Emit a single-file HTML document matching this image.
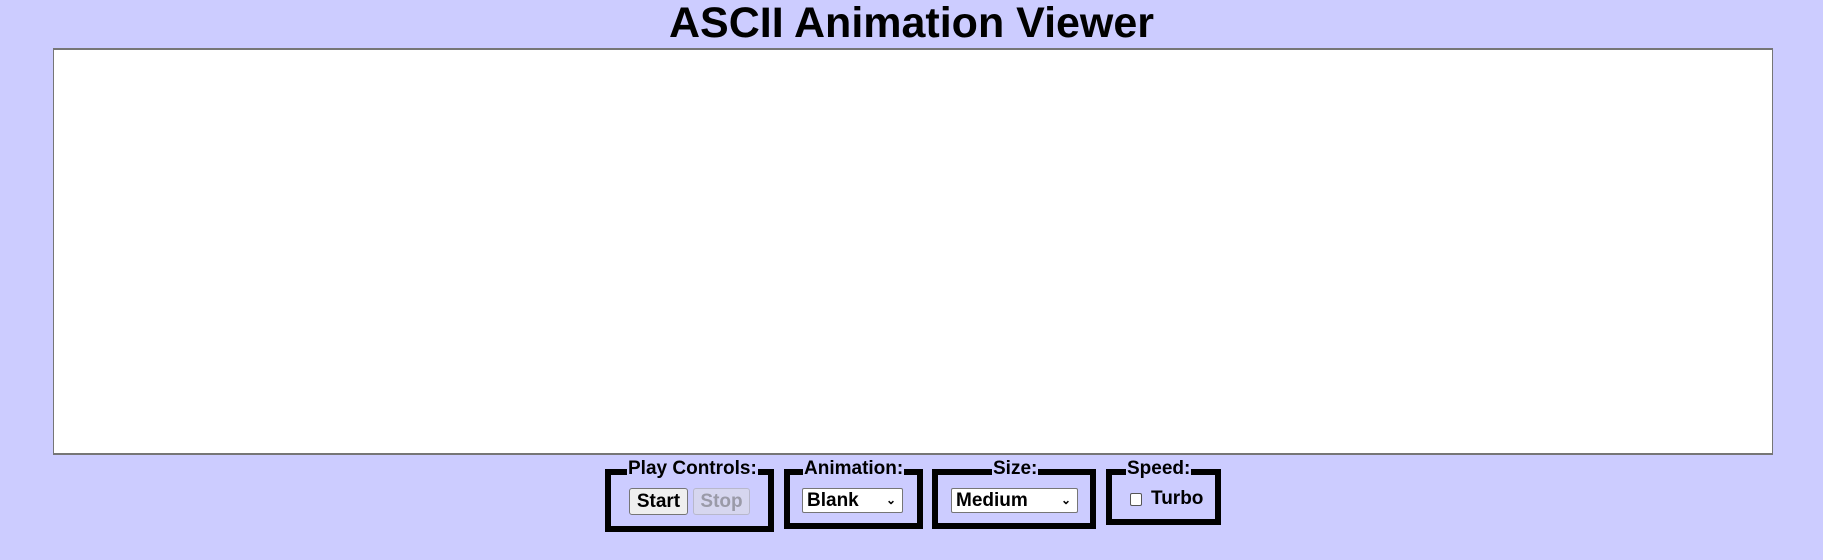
<!DOCTYPE html>
<html><head><style>
body{margin:0;background:#ccf;width:1823px;height:560px;position:relative;overflow:hidden;font-family:"Liberation Sans",Arial,sans-serif}
h1{position:absolute;left:0;width:1823px;top:0;margin:0;text-align:center;font-size:43px;line-height:46px;font-weight:bold}
.ta{position:absolute;left:53px;top:48px;width:1718px;height:403px;background:#fff;border:1px solid #767676;border-top:2px solid #767676;border-bottom:2px solid #767676}
.fs{position:absolute;border:6px solid #000;box-sizing:border-box}
.lg{position:absolute;top:-16px;background:#ccf;font-weight:bold;font-size:19px;line-height:20px;padding:0 1px}
.btn{position:absolute;top:488px;height:27px;box-sizing:border-box;border:1px solid #767676;border-radius:3px;font-weight:bold;font-size:19px;line-height:25px;text-align:center}
.sel{position:absolute;top:488px;height:25px;box-sizing:border-box;background:#fff;border:1px solid #767676;border-radius:2px;font-weight:bold;font-size:19px;line-height:23px;padding-left:4px}
.sel span{position:absolute;right:6px;top:0;font-size:12px}
</style></head><body>
<h1>ASCII Animation Viewer</h1>
<div class="ta"></div>
<div class="fs" style="left:605px;top:469px;width:169px;height:63px"><div class="lg" style="left:16px">Play Controls:</div></div>
<div class="btn" style="left:629px;width:59px;background:#efefef">Start</div>
<div class="btn" style="left:693px;width:57px;background:#d6d6ef;color:#9a9aa8;border-color:#b8b8cc">Stop</div>
<div class="fs" style="left:784px;top:469px;width:139px;height:60px"><div class="lg" style="left:13px">Animation:</div></div>
<div class="sel" style="left:802px;width:101px">Blank<span>&#8964;</span></div>
<div class="fs" style="left:932px;top:469px;width:164px;height:60px"><div class="lg" style="left:54px">Size:</div></div>
<div class="sel" style="left:951px;width:127px">Medium<span>&#8964;</span></div>
<div class="fs" style="left:1106px;top:469px;width:115px;height:56px"><div class="lg" style="left:14px">Speed:</div></div>
<div style="position:absolute;left:1130px;top:493px;width:10px;height:11px;border:1px solid #555;border-radius:2px;background:#fff"></div>
<div style="position:absolute;left:1151px;top:488px;font-weight:bold;font-size:19px;line-height:22px">Turbo</div>
</body></html>
